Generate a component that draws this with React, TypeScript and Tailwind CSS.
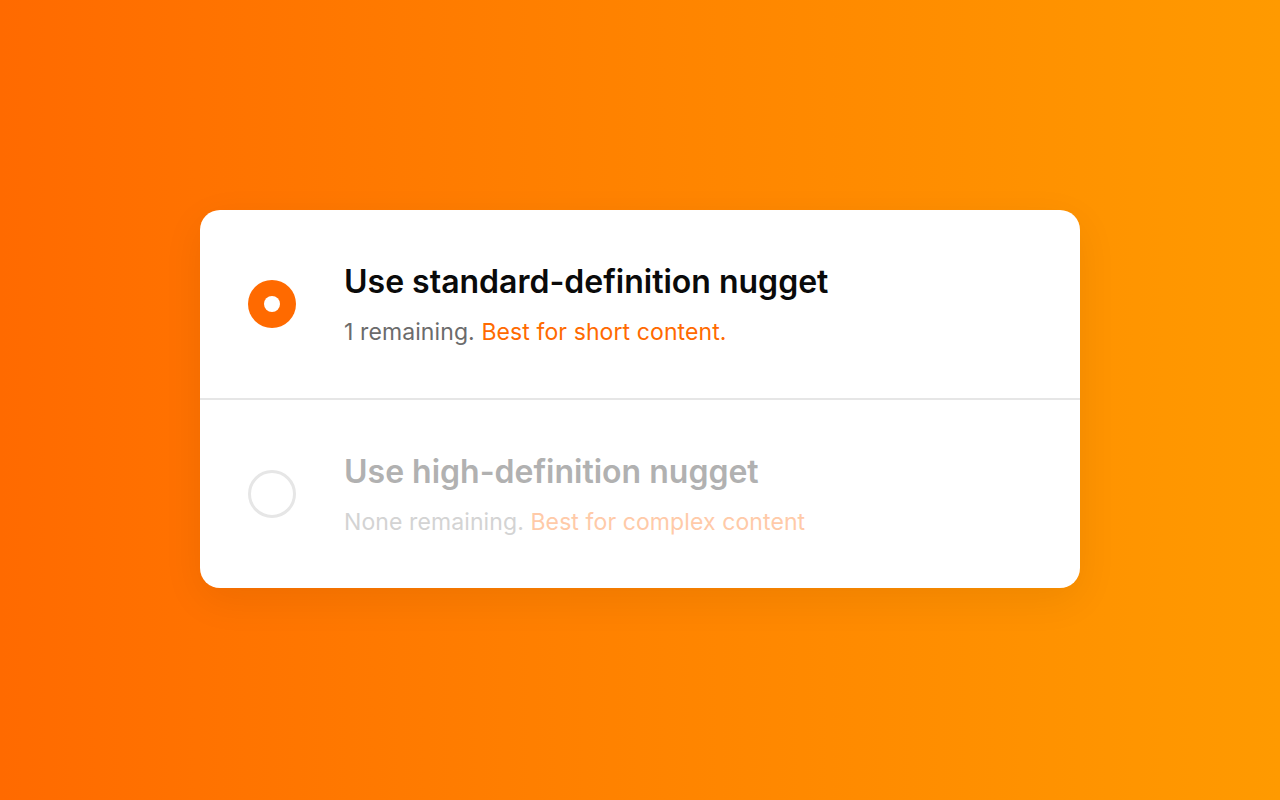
import { useState } from 'react';

const options = [
  { id: 'sd', title: 'Use standard-definition nugget', remaining: '1 remaining.', hint: 'Best for short content.', disabled: false },
  { id: 'hd', title: 'Use high-definition nugget', remaining: 'None remaining.', hint: 'Best for complex content', disabled: true },
];

export default function App() {
  const [selected, setSelected] = useState('sd');

  return (
    <div
      className="min-h-screen w-full flex items-center justify-center bg-gradient-to-r from-[#ff6a00] to-[#ff9a00]"
      style={{ fontFamily: 'Inter, "Noto Sans", sans-serif' }}
    >
      <div className="w-[880px] mb-[2px] bg-white rounded-[20px] shadow-[0_12px_40px_rgba(0,0,0,0.07)] overflow-hidden">
        {options.map((o, i) => {
          const active = selected === o.id;
          return (
            <button
              key={o.id}
              type="button"
              disabled={o.disabled}
              onClick={() => setSelected(o.id)}
              className={`w-full flex items-center gap-12 px-12 text-left ${i > 0 ? 'h-[190px] border-t-2 border-[#e6e6e6]' : 'h-[188px]'}`}
            >
              {active ? (
                <span className="w-12 h-12 rounded-full bg-[#ff6a00] flex items-center justify-center shrink-0">
                  <span className="w-4 h-4 rounded-full bg-white" />
                </span>
              ) : (
                <span className="w-12 h-12 rounded-full border-[3px] border-[#e6e6e6] shrink-0" />
              )}
              <div className="flex flex-col gap-[15px]">
                <span className={`text-[32px] leading-[40px] font-semibold ${o.disabled ? 'text-[#b1b1b1]' : 'text-[#0a0a0a]'}`}>
                  {o.title}
                </span>
                <span className="text-[23px] leading-[30px] tracking-[0.1px]">
                  <span className={o.disabled ? 'text-[#d3d3d3]' : 'text-[#6b6b6b]'}>{o.remaining}</span>{' '}
                  <span className={o.disabled ? 'text-[#ffcaa8]' : 'text-[#ff6a00]'}>{o.hint}</span>
                </span>
              </div>
            </button>
          );
        })}
      </div>
    </div>
  );
}
